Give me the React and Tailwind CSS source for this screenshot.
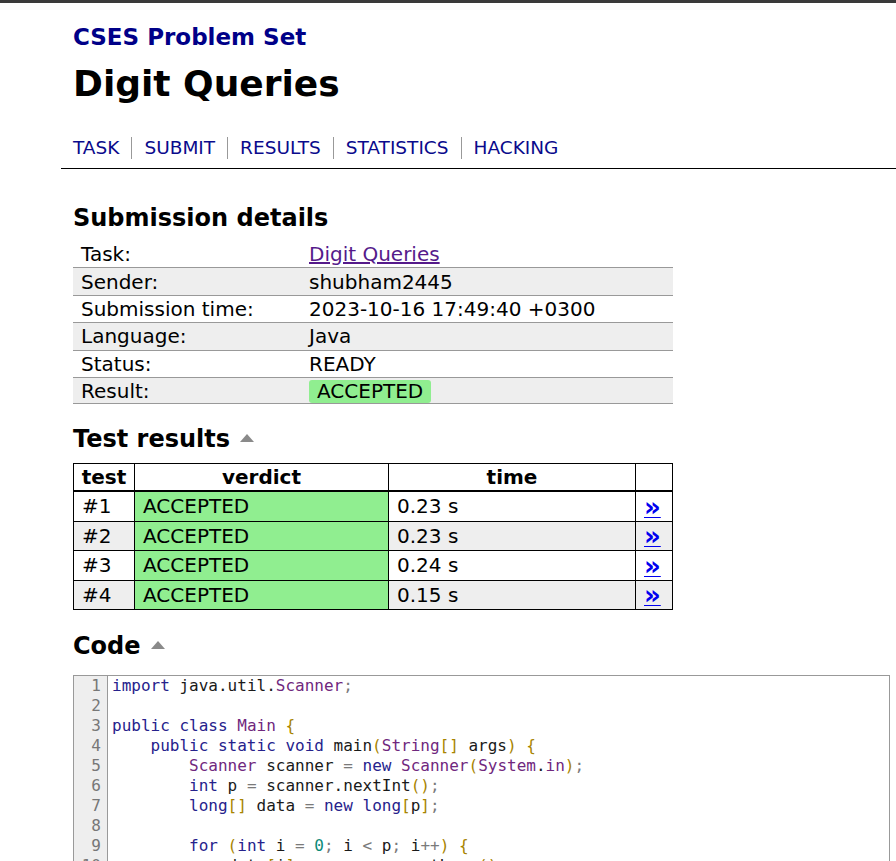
import React from "react";

const code = [
  "import java.util.Scanner;",
  "",
  "public class Main {",
  "    public static void main(String[] args) {",
  "        Scanner scanner = new Scanner(System.in);",
  "        int p = scanner.nextInt();",
  "        long[] data = new long[p];",
  "",
  "        for (int i = 0; i < p; i++) {",
  "            data[i] = scanner.nextLong();",
  "        }",
  "",
  "        for (int i = 0; i < p; i++) {",
];

const keywords = ["import", "public", "class", "static", "void", "int", "long", "new", "for"];
const types = ["Scanner", "Main", "String", "System", "in"];

const tokenColor = (t) => {
  if (keywords.includes(t)) return "text-[#26228c]";
  if (types.includes(t)) return "text-[#70287e]";
  if (/^\d+$/.test(t)) return "text-[#0b8a78]";
  if (/^[(){}\[\]]$/.test(t)) return "text-[#a88400]";
  if (/^(=|<|\+\+|;)$/.test(t)) return "text-[#7a7a7a]";
  return "text-[#1a1a1a]";
};

const CodeLine = ({ line }) => {
  const parts = line.split(/(\s+|[A-Za-z_][A-Za-z0-9_]*|\d+|\+\+|[(){}\[\]=<;.,])/).filter((p) => p !== "");
  return (
    <div className="h-[20px] whitespace-pre">
      {parts.length === 0 && " "}
      {parts.map((p, i) => (
        <span key={i} className={tokenColor(p)}>
          {p}
        </span>
      ))}
    </div>
  );
};

const Arrow = () => (
  <svg width="14" height="8" viewBox="0 0 14 8" className="inline-block ml-[10px] mb-[4px]">
    <polygon points="0,8 7,0 14,8" fill="#8a8a8a" />
  </svg>
);

const details = [
  ["Task:", "link"],
  ["Sender:", "shubham2445"],
  ["Submission time:", "2023-10-16 17:49:40 +0300"],
  ["Language:", "Java"],
  ["Status:", "READY"],
  ["Result:", "badge"],
];

const tests = [
  ["#1", "0.23 s"],
  ["#2", "0.23 s"],
  ["#3", "0.24 s"],
  ["#4", "0.15 s"],
];

const navItems = ["TASK", "SUBMIT", "RESULTS", "STATISTICS", "HACKING"];

export default function App() {
  return (
    <div className="min-h-screen bg-white text-black font-['DejaVu_Sans',sans-serif]">
      <div className="h-[3px] bg-[#3a3a3a]" />
      <div className="ml-[61px] w-[900px]">
        <div className="pl-3">
          <div className="mt-[20px] text-[23px] leading-[28px] font-bold text-[#000088]">CSES Problem Set</div>
          <h1 className="mt-[11px] text-[36px] leading-[44px] font-bold">Digit Queries</h1>
          <div className="mt-[31px] flex text-[18.5px] leading-[22px] text-[#0a0a8c]">
            {navItems.map((n, i) => (
              <span
                key={n}
                className={i === 0 ? "pr-[12px]" : "px-[12px] border-l border-[#999]"}
              >
                {n}
              </span>
            ))}
          </div>
        </div>
        <div className="mt-[9px] h-px bg-black" />

        <div className="pl-3">
          <h2 className="mt-[34px] text-[24px] leading-[30px] font-bold">Submission details</h2>
          <div className="mt-[7px] w-[600px] text-[20px]">
            {details.map(([label, val], i) => (
              <div
                key={label}
                className={`flex h-[27.4px] items-center ${i > 0 ? "border-t border-[#999]" : ""} ${
                  i % 2 === 1 ? "bg-[#eeeeee]" : "bg-white"
                } ${i === details.length - 1 ? "border-b" : ""}`}
              >
                <div className="w-[228px] pl-2">{label}</div>
                <div className="pl-2">
                  {val === "link" ? (
                    <span className="underline text-[#551a8b]">Digit Queries</span>
                  ) : val === "badge" ? (
                    <span className="inline-block rounded-[3px] bg-[#90ee90] px-2 leading-[23px]">ACCEPTED</span>
                  ) : (
                    val
                  )}
                </div>
              </div>
            ))}
          </div>

          <h2 className="mt-[20px] text-[24px] leading-[30px] font-bold">
            Test results
            <Arrow />
          </h2>
          <table className="mt-[9px] w-[600px] table-fixed border-collapse border border-black text-[20px]">
            <thead>
              <tr className="border-b-2 border-black leading-[26px]">
                <th className="w-[61px] border border-black p-0 font-bold">test</th>
                <th className="w-[254px] border border-black p-0 font-bold">verdict</th>
                <th className="w-[247px] border border-black p-0 font-bold">time</th>
                <th className="border border-black p-0" />
              </tr>
            </thead>
            <tbody>
              {tests.map(([n, t], i) => (
                <tr key={n} className={`leading-[28.5px] ${i % 2 === 1 ? "bg-[#eeeeee]" : "bg-white"}`}>
                  <td className="border border-black py-0 pl-2">{n}</td>
                  <td className="border border-black bg-[#90ee90] py-0 pl-2">ACCEPTED</td>
                  <td className="border border-black py-0 pl-2">{t}</td>
                  <td className="border border-black py-0 pl-2">
                    <div className="flex h-[28.5px] items-center">
                      <a className="font-bold text-[26px] leading-[26px] text-[#0000ee] underline decoration-1 underline-offset-1">
                        »
                      </a>
                    </div>
                  </td>
                </tr>
              ))}
            </tbody>
          </table>

          <h2 className="mt-[21px] text-[24px] leading-[30px] font-bold">
            Code
            <Arrow />
          </h2>
          <div className="mt-[14px] flex w-[817px] border border-[#999] font-['DejaVu_Sans_Mono',monospace] text-[16px] leading-[20px]">
            <div className="w-[34px] shrink-0 border-r border-[#999] bg-[#eeeeee] pr-[6px] text-right text-[#777]">
              {code.map((_, i) => (
                <div key={i} className="h-[20px]">
                  {i + 1}
                </div>
              ))}
            </div>
            <div className="pl-[4px]">
              {code.map((l, i) => (
                <CodeLine key={i} line={l} />
              ))}
            </div>
          </div>
        </div>
      </div>
    </div>
  );
}
